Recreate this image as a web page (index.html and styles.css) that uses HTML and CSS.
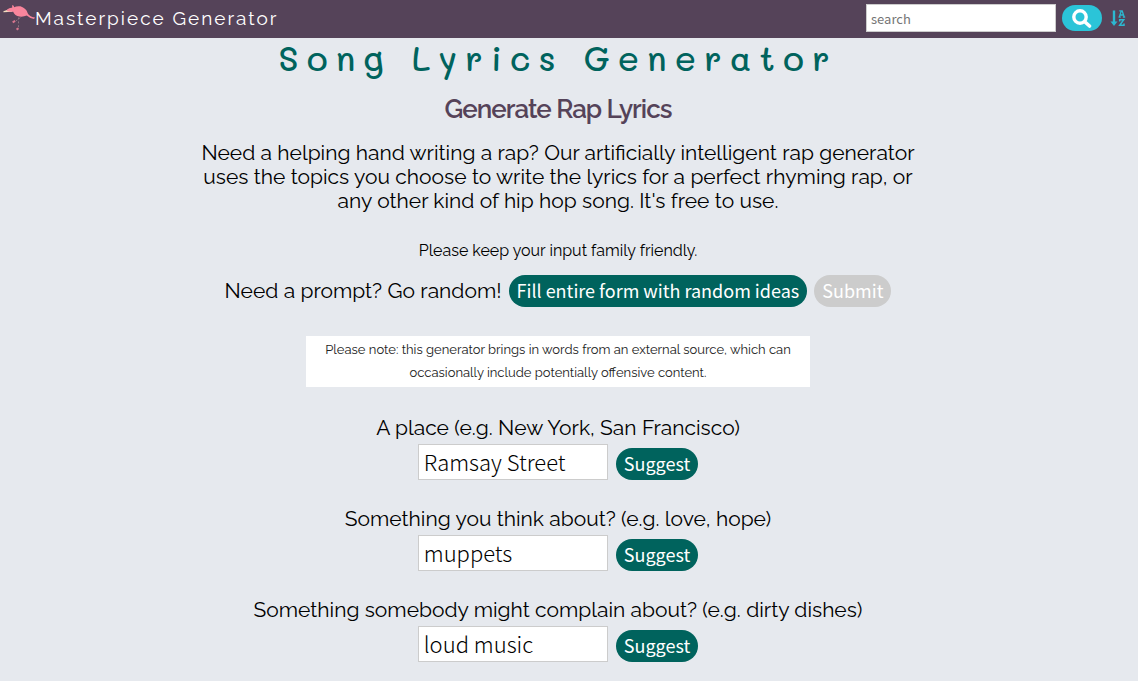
FILE: index.html
```html
<!DOCTYPE html>
<html lang="en">
<head>
    <meta charset="UTF-8">
    <meta name="viewport" content="width=device-width, initial-scale=1.0">
    <title>Song Lyrics Generator</title>
    <link rel="stylesheet" href="styles.css">
</head>
<body>
    <header class="top-bar">
        <a class="brand" href="#">
            <svg class="logo" viewBox="0 0 34 32" aria-hidden="true">
                <path d="M1.500 9 8 6.800 11 9.500Q6 9.800 1.500 10Z" fill="#f2dcc0"/>
                <path d="M5 7.600Q8 5 10.500 5.500L10.500 2.500Q12.500 3 12.500 5 15 3.500 19 4 25 6 26.500 11 28 14.500 34 15.500L33 17Q28 16 25.500 13.500 22 15 18 14.500 13 13.500 11.500 9.500 8 10 5 8.800Z" fill="#f9859c"/>
                <path d="M17 15.500V27M19 15.500 13 20" fill="none" stroke="#8b7480" stroke-width="1" stroke-dasharray="2 2"/>
                <path d="M11 20.500 13.500 19M15 28 17 26.500" stroke="#d9758e" stroke-width="2"/>
            </svg>
            <span>Masterpiece Generator</span>
        </a>
        <form class="search-form">
            <input class="search-input" type="text" placeholder="search" aria-label="Search">
            <button class="search-btn" type="button" aria-label="Search">
                <svg viewBox="0 0 20 20" width="20" height="20">
                    <circle cx="8" cy="9" r="6.200" fill="none" stroke="#fff" stroke-width="3.400"/>
                    <path d="m13 14 4.500 4" stroke="#fff" stroke-width="3.600" stroke-linecap="round"/>
                </svg>
            </button>
            <a class="sort-link" href="#" aria-label="All generators A to Z">
                <svg viewBox="0 0 16 18" width="16" height="18" fill="none" stroke="#2cb8d0">
                    <path d="M4 1.500v12" stroke-width="2.400"/>
                    <path d="M.5 12.500h7L4 17Z" fill="#2cb8d0" stroke="none"/>
                    <path d="m9.300 8 2-6h.9l2 6M10 6h3.500M8.500 8.200h2.300M12.800 8.200h2.400M9.300 1.900h2.500" stroke-width="1.300"/>
                    <path d="M9.700 12.500v-1.800h4l-4 5.600h4.300v-1.800" stroke-width="1.500"/>
                </svg>
            </a>
        </form>
    </header>

    <main class="content">
        <h1>Song Lyrics Generator</h1>
        <h2>Generate Rap Lyrics</h2>
        <p class="intro">Need a helping hand writing a rap? Our artificially intelligent rap generator uses the topics you choose to write the lyrics for a perfect rhyming rap, or any other kind of hip hop song. It's free to use.</p>
        <p class="friendly">Please keep your input family friendly.</p>

        <form class="lyrics-form">
            <div class="prompt">
                <span>Need a prompt? Go random!</span>
                <button class="btn" type="button">Fill entire form with random ideas</button>
                <button class="btn" type="submit" disabled>Submit</button>
            </div>

            <p class="note">Please note: this generator brings in words from an external source, which can occasionally include potentially offensive content.</p>

            <div class="field">
                <label for="place">A place (e.g. New York, San Francisco)</label>
                <div class="field-row">
                    <input id="place" type="text" value="Ramsay Street">
                    <button class="btn" type="button">Suggest</button>
                </div>
            </div>
            <div class="field">
                <label for="thought">Something you think about? (e.g. love, hope)</label>
                <div class="field-row">
                    <input id="thought" type="text" value="muppets">
                    <button class="btn" type="button">Suggest</button>
                </div>
            </div>
            <div class="field">
                <label for="complaint">Something somebody might complain about? (e.g. dirty dishes)</label>
                <div class="field-row">
                    <input id="complaint" type="text" value="loud music">
                    <button class="btn" type="button">Suggest</button>
                </div>
            </div>
        </form>
    </main>
</body>
</html>
```
FILE: styles.css
```css
* {
    box-sizing: border-box;
}
body {
    margin: 0;
    background-color: #e6e9ee;
    color: #000;
    font-family: Raleway, Lato, sans-serif;
    font-size: 21px;
    font-weight: 400;
    line-height: 24px;
}
.top-bar {
    display: flex;
    justify-content: space-between;
    align-items: center;
    height: 38px;
    padding: 0 12px 2px 2px;
    background-color: #554359;
}
.brand {
    display: flex;
    align-items: center;
    color: #fff;
    font-size: 19px;
    letter-spacing: 2px;
    text-decoration: none;
}
.logo {
    width: 33px;
    height: 32px;
    overflow: visible;
}
.search-form {
    display: flex;
    align-items: center;
}
.search-input {
    width: 190px;
    height: 28px;
    padding: 0 4px;
    border: 1px solid #ccc;
    font-family: "Noto Sans CJK SC", sans-serif;
    font-size: 13px;
}
.search-btn {
    display: flex;
    justify-content: center;
    align-items: center;
    width: 40px;
    height: 26px;
    margin: 0 8px 0 6px;
    padding: 0;
    border: none;
    border-radius: 13px;
    background-color: #2bc4d8;
    cursor: pointer;
}
.sort-link {
    display: flex;
}
.content {
    padding: 0 22px 20px 0;
    text-align: center;
}
h1 {
    margin: 0;
    color: #00635d;
    font-family: Mali, "Comic Neue", Lato, sans-serif;
    font-size: 35px;
    font-weight: 500;
    line-height: 38px;
    letter-spacing: 8px;
}
h2 {
    margin: 16px 0 15px;
    color: #554359;
    font-size: 26px;
    font-weight: 600;
    line-height: 34px;
    letter-spacing: -1px;
}
.intro {
    max-width: 740px;
    margin: 0 auto;
}
.friendly {
    margin: 26px 0 12px;
    font-size: 16px;
}
.prompt {
    display: flex;
    flex-wrap: wrap;
    justify-content: center;
    align-items: center;
    gap: 7px;
}
.btn {
    height: 32px;
    padding: 0 8px 2px;
    border: none;
    border-radius: 16px;
    background-color: #00635d;
    color: #fff;
    font-family: "Noto Sans CJK SC", sans-serif;
    font-size: 18px;
    font-weight: 400;
    line-height: 30px;
    cursor: pointer;
}
.btn:disabled {
    background-color: #ccc;
    cursor: default;
}
.note {
    max-width: 504px;
    margin: 29px auto;
    padding: 2px 10px 3px;
    background-color: #fff;
    color: #222;
    font-size: 13px;
    line-height: 23px;
}
.field {
    margin-bottom: 27px;
}
.field label {
    display: block;
    margin-bottom: 4px;
}
.field-row {
    display: flex;
    justify-content: center;
    align-items: flex-end;
    gap: 8px;
}
.field-row input {
    width: 190px;
    height: 36px;
    padding: 0 5px 2px;
    border: 1px solid #ccc;
    font-family: "Noto Sans CJK SC", sans-serif;
    font-size: 22px;
    font-weight: 300;
}
```
